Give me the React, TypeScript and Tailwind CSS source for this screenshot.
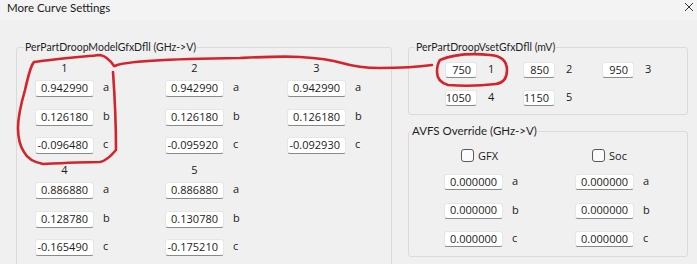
import { ReactNode } from "react";

const FONT = "font-['Open_Sans','Noto_Sans',sans-serif]";
const LABEL_FONT = "font-['Lato','Open_Sans',sans-serif]";

const droopModel = [
  { id: "1", values: ["0.942990", "0.126180", "-0.096480"] },
  { id: "2", values: ["0.942990", "0.126180", "-0.095920"] },
  { id: "3", values: ["0.942990", "0.126180", "-0.092930"] },
  { id: "4", values: ["0.886880", "0.128780", "-0.165490"] },
  { id: "5", values: ["0.886880", "0.130780", "-0.175210"] },
];

const vset = [
  { id: "1", value: "750" },
  { id: "2", value: "850" },
  { id: "3", value: "950" },
  { id: "4", value: "1050" },
  { id: "5", value: "1150" },
];

const LETTERS = ["a", "b", "c"];

function Field({ value, className = "" }: { value: string; className?: string }) {
  return (
    <div
      className={
        "flex shrink-0 items-center justify-end rounded-[3px] border border-[#e6e6e6] border-b-[#8a8a8a] bg-white pr-[5px] text-[11px] text-[#1b1b1b] " +
        className
      }
    >
      {value}
    </div>
  );
}

function Group({
  label,
  className = "",
  legendPad = "pl-[7px]",
  legendSize = "text-[10.5px]",
  children,
}: {
  label: string;
  className?: string;
  legendPad?: string;
  legendSize?: string;
  children: ReactNode;
}) {
  return (
    <fieldset className={"rounded-[3px] border border-[#dadada] " + legendPad + " " + className}>
      <legend className={"px-[1px] leading-[14px] text-[#1f1f1f] " + legendSize + " " + LABEL_FONT}>{label}</legend>
      {children}
    </fieldset>
  );
}

function CoeffColumn({ id, values, className = "" }: { id: string; values: string[]; className?: string }) {
  return (
    <div className={"flex flex-col " + className}>
      <div className="w-[59px] text-center text-[11px] leading-[14px]">{id}</div>
      <div className="mt-[5px] flex flex-col gap-[11.5px]">
        {values.map((v, i) => (
          <div key={i} className="flex items-start">
            <Field value={v} className="h-[17px] w-[59px]" />
            <span className="ml-[9px] text-[11px] leading-[14px]">{LETTERS[i]}</span>
          </div>
        ))}
      </div>
    </div>
  );
}

function Checkbox({ label }: { label: string }) {
  return (
    <div className="flex items-center">
      <div className="h-[13px] w-[13px] rounded-[3px] border border-[#5a5a5a] bg-[#fbfbfb]" />
      <span className="ml-[4px] text-[11px] leading-[13px]">{label}</span>
    </div>
  );
}

export default function App() {
  return (
    <div className={"relative h-[264px] w-[697px] overflow-hidden bg-[#f0f0f0] text-[#1b1b1b] " + FONT}>
      {/* Title bar */}
      <div className="flex h-[20px] items-start justify-between bg-[#f3f3f3] pl-[7px] pr-[3px]">
        <span className={"pt-[1px] text-[11.5px] leading-[14px] text-[#1a1a1a] " + LABEL_FONT}>More Curve Settings</span>
        <svg width="10" height="10" viewBox="0 0 10 10" className="mt-[2px]">
          <path d="M1 1 L9 9 M9 1 L1 9" stroke="#333" strokeWidth="1" fill="none" />
        </svg>
      </div>

      <div className="flex">
        {/* Left group */}
        <Group label="PerPartDroopModelGfxDfll (GHz->V)" className="ml-[16px] mt-[20px] h-[260px] w-[376px]">
          <div className="ml-[11px] mt-[7px] flex">
            <CoeffColumn id={droopModel[0].id} values={droopModel[0].values} className="w-[130px]" />
            <CoeffColumn id={droopModel[1].id} values={droopModel[1].values} className="w-[122px]" />
            <CoeffColumn id={droopModel[2].id} values={droopModel[2].values} />
          </div>
          <div className="ml-[11px] mt-[9px] flex">
            <CoeffColumn id={droopModel[3].id} values={droopModel[3].values} className="w-[130px]" />
            <CoeffColumn id={droopModel[4].id} values={droopModel[4].values} className="w-[122px]" />
          </div>
        </Group>

        {/* Right column */}
        <div className="ml-[16px] mt-[20px] flex w-[280px] flex-col">
          <Group label="PerPartDroopVsetGfxDfll (mV)" legendPad="pl-[6px]" className="pb-[8px]">
            <div className="ml-[30px] mt-[8px] grid grid-cols-[78px_79px_auto] gap-y-[12px]">
              {vset.map((s) => (
                <div key={s.id} className="flex items-start">
                  <Field value={s.value} className="h-[16px] w-[32px]" />
                  <span className="ml-[11px] text-[11px] leading-[13px]">{s.id}</span>
                </div>
              ))}
            </div>
          </Group>

          <Group
            label="AVFS Override (GHz->V)"
            legendPad="pl-[2px]"
            legendSize="text-[11.5px]"
            className="mt-[9px] pb-[9px]"
          >
            <div className="ml-[33px] mt-[11px] flex">
              {["GFX", "Soc"].map((name, c) => (
                <div key={name} className={"flex flex-col " + (c === 0 ? "w-[131px]" : "")}>
                  <div className="ml-[17px]">
                    <Checkbox label={name} />
                  </div>
                  <div className="mt-[12px] flex flex-col gap-[12.5px]">
                    {LETTERS.map((l) => (
                      <div key={l} className="flex items-start">
                        <Field value="0.000000" className="h-[16px] w-[59px]" />
                        <span className="ml-[9px] text-[11px] leading-[13px]">{l}</span>
                      </div>
                    ))}
                  </div>
                </div>
              ))}
            </div>
          </Group>
        </div>
      </div>

      {/* Hand-drawn red annotation over the screenshot */}
      <svg className="pointer-events-none absolute left-0 top-0" width="697" height="264" viewBox="0 0 697 264">
        <path
          d="M114 66 C110 60 106 56 100 55 C80 57 55 59 34 62 C30 66 28 78 25 90 C21 104 18 118 18 128 C18 138 20 146 24 152 C27 158 33 162 43 164 C62 163 84 162 100 162 C106 161 111 156 116 150 C116 128 115 100 113 72"
          stroke="#d3232b"
          strokeWidth="2.6"
          fill="none"
          strokeLinecap="round"
          strokeLinejoin="round"
        />
        <path
          d="M115 66 C122 62 160 59 240 58 C262 57 282 56 300 57 C318 58 332 60 342 63 C352 66 362 68 380 68 C400 68 418 67 432 65"
          stroke="#d3232b"
          strokeWidth="2.6"
          fill="none"
          strokeLinecap="round"
        />
        <path
          d="M440 60 C452 55 470 53 490 55 C502 56 507 62 507 70 C507 78 503 83 496 84 C480 86 460 86 448 85 C441 83 437 78 437 72 C437 66 438 63 440 60"
          stroke="#d3232b"
          strokeWidth="2.6"
          fill="none"
          strokeLinecap="round"
        />
      </svg>
    </div>
  );
}
